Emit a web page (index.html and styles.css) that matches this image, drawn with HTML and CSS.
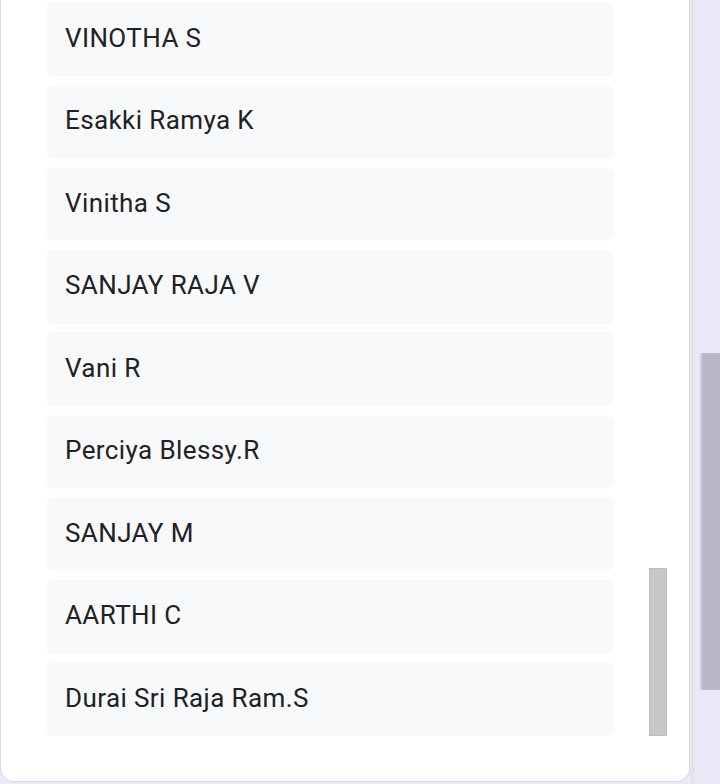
FILE: index.html
```html
<!DOCTYPE html>
<html>
<head>
<meta charset="utf-8">
<link rel="stylesheet" href="styles.css">
</head>
<body>
<div class="page">
  <div class="card">
    <ul class="list">
      <li class="item">VINOTHA S</li>
      <li class="item">Esakki Ramya K</li>
      <li class="item">Vinitha S</li>
      <li class="item">SANJAY RAJA V</li>
      <li class="item">Vani R</li>
      <li class="item">Perciya Blessy.R</li>
      <li class="item">SANJAY M</li>
      <li class="item">AARTHI C</li>
      <li class="item">Durai Sri Raja Ram.S</li>
    </ul>
    <div class="inner-thumb"></div>
  </div>
  <div class="rail">
    <div class="outer-thumb"></div>
  </div>
</div>
</body>
</html>
```

FILE: styles.css
```css
html, body {
  margin: 0;
  padding: 0;
  background: #ece8f8;
  font-family: Roboto, "Noto Sans", sans-serif;
}
.page {
  display: flex;
  width: 720px;
  height: 784px;
  overflow: hidden;
}
.card {
  box-sizing: border-box;
  width: 690px;
  height: 782px;
  background: #ffffff;
  border-left: 1px solid #dcdce0;
  border-right: 1px solid #dcdce0;
  border-bottom: 1px solid #dcdce0;
  border-radius: 0 0 14px 14px;
  display: flex;
  align-items: flex-end;
  padding: 0 0 45px 45px;
  gap: 35px;
}
.list {
  list-style: none;
  margin: 0;
  padding: 0;
  width: 568px;
  display: flex;
  flex-direction: column;
  gap: 8.5px;
}
.item {
  box-sizing: border-box;
  height: 74px;
  background: #f8f9fa;
  border-radius: 8px;
  padding: 0 0 3px 19px;
  display: flex;
  align-items: center;
  font-size: 26px;
  color: #202124;
  letter-spacing: 0.4px;
}
.inner-thumb {
  box-sizing: border-box;
  width: 18px;
  height: 168px;
  background: #c8c8c8;
  border: 1px solid #bdbdbd;
  flex-shrink: 0;
}
.rail {
  flex: 1;
  display: flex;
  flex-direction: column;
  align-items: flex-end;
  padding-top: 353px;
  border-left: 5px solid #e6e3ef;
}
.outer-thumb {
  box-sizing: border-box;
  width: 20px;
  height: 337px;
  background: #bbb7c6;
  border-left: 2px solid #d2cfdc;
}
```
